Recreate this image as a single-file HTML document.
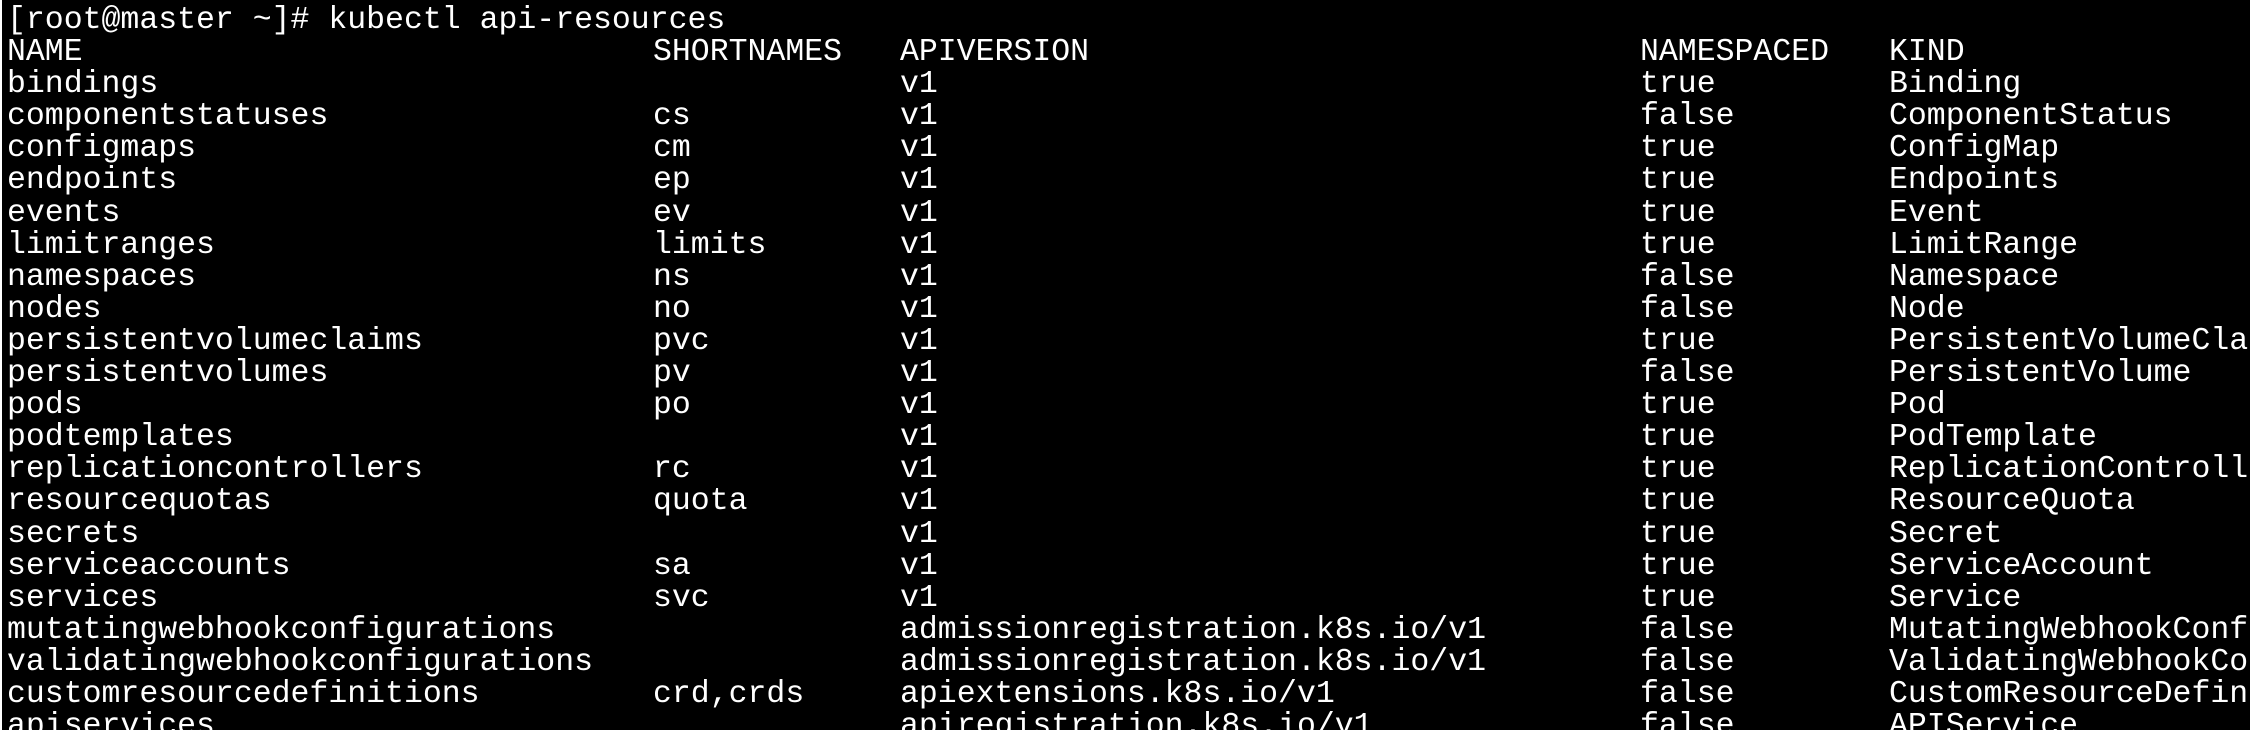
<!DOCTYPE html>
<html><head><meta charset="utf-8"><style>
html,body{margin:0;padding:0;background:#000;width:2250px;height:730px;overflow:hidden;position:relative}
#b{position:absolute;left:0;top:0;width:2px;height:730px;background:#fff}
#c{position:absolute;left:7px;top:0;width:2243px;height:730px;overflow:hidden;
font-family:"Liberation Mono",monospace;font-size:31.5px;line-height:32.1px;color:#fff}
#i{position:absolute;left:0;top:5px;width:2243px}
.r{position:relative;height:32.1px;width:2243px;overflow:hidden}
.r span{position:absolute;top:0;white-space:pre}
.a{left:0}.s{left:646px}.v{left:893px}.n{left:1633px}.k{left:1882px}
</style></head><body><div id="b"></div><div id="c"><div id="i"><div class="r"><span class="a">[root@master ~]# kubectl api-resources</span></div><div class="r"><span class="a">NAME</span><span class="s">SHORTNAMES</span><span class="v">APIVERSION</span><span class="n">NAMESPACED</span><span class="k">KIND</span></div><div class="r"><span class="a">bindings</span><span class="v">v1</span><span class="n">true</span><span class="k">Binding</span></div><div class="r"><span class="a">componentstatuses</span><span class="s">cs</span><span class="v">v1</span><span class="n">false</span><span class="k">ComponentStatus</span></div><div class="r"><span class="a">configmaps</span><span class="s">cm</span><span class="v">v1</span><span class="n">true</span><span class="k">ConfigMap</span></div><div class="r"><span class="a">endpoints</span><span class="s">ep</span><span class="v">v1</span><span class="n">true</span><span class="k">Endpoints</span></div><div class="r"><span class="a">events</span><span class="s">ev</span><span class="v">v1</span><span class="n">true</span><span class="k">Event</span></div><div class="r"><span class="a">limitranges</span><span class="s">limits</span><span class="v">v1</span><span class="n">true</span><span class="k">LimitRange</span></div><div class="r"><span class="a">namespaces</span><span class="s">ns</span><span class="v">v1</span><span class="n">false</span><span class="k">Namespace</span></div><div class="r"><span class="a">nodes</span><span class="s">no</span><span class="v">v1</span><span class="n">false</span><span class="k">Node</span></div><div class="r"><span class="a">persistentvolumeclaims</span><span class="s">pvc</span><span class="v">v1</span><span class="n">true</span><span class="k">PersistentVolumeCla</span></div><div class="r"><span class="a">persistentvolumes</span><span class="s">pv</span><span class="v">v1</span><span class="n">false</span><span class="k">PersistentVolume</span></div><div class="r"><span class="a">pods</span><span class="s">po</span><span class="v">v1</span><span class="n">true</span><span class="k">Pod</span></div><div class="r"><span class="a">podtemplates</span><span class="v">v1</span><span class="n">true</span><span class="k">PodTemplate</span></div><div class="r"><span class="a">replicationcontrollers</span><span class="s">rc</span><span class="v">v1</span><span class="n">true</span><span class="k">ReplicationControll</span></div><div class="r"><span class="a">resourcequotas</span><span class="s">quota</span><span class="v">v1</span><span class="n">true</span><span class="k">ResourceQuota</span></div><div class="r"><span class="a">secrets</span><span class="v">v1</span><span class="n">true</span><span class="k">Secret</span></div><div class="r"><span class="a">serviceaccounts</span><span class="s">sa</span><span class="v">v1</span><span class="n">true</span><span class="k">ServiceAccount</span></div><div class="r"><span class="a">services</span><span class="s">svc</span><span class="v">v1</span><span class="n">true</span><span class="k">Service</span></div><div class="r"><span class="a">mutatingwebhookconfigurations</span><span class="v">admissionregistration.k8s.io/v1</span><span class="n">false</span><span class="k">MutatingWebhookConf</span></div><div class="r"><span class="a">validatingwebhookconfigurations</span><span class="v">admissionregistration.k8s.io/v1</span><span class="n">false</span><span class="k">ValidatingWebhookCo</span></div><div class="r"><span class="a">customresourcedefinitions</span><span class="s">crd,crds</span><span class="v">apiextensions.k8s.io/v1</span><span class="n">false</span><span class="k">CustomResourceDefin</span></div><div class="r"><span class="a">apiservices</span><span class="v">apiregistration.k8s.io/v1</span><span class="n">false</span><span class="k">APIService</span></div></div></div></body></html>
